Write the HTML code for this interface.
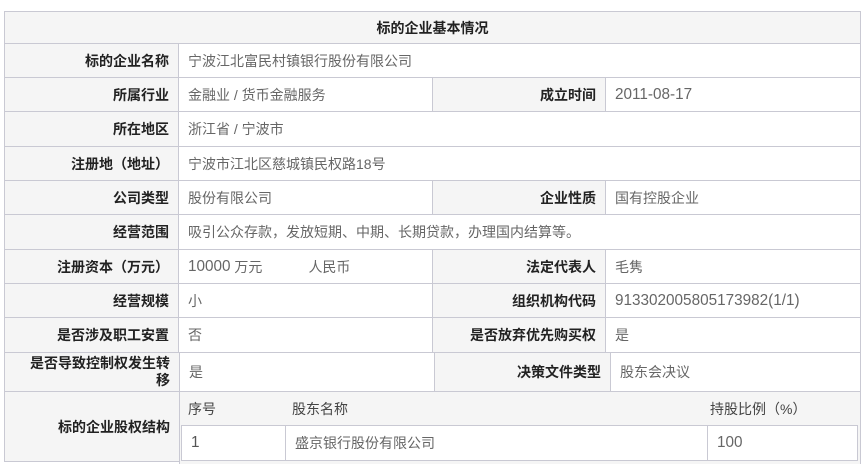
<!DOCTYPE html><html><head><meta charset="utf-8"><style>
body{margin:0;width:865px;height:464px;background:#fff;font-family:"Liberation Sans","Noto Sans CJK SC",sans-serif;font-size:14px;position:relative;overflow:hidden}
.c{position:absolute;box-sizing:border-box;border:1px solid #c9c9d3;display:flex;align-items:center;padding:0 9px;white-space:nowrap}
.l{background:#f5f5f5;justify-content:flex-end;font-weight:bold;color:#222}
.v{color:#666;background:#fff}
.h{background:#f5f5f5;justify-content:center;font-weight:bold;color:#222}
.n{font-size:15.3px}
</style></head><body>
<div class="c h" style="left:4px;top:11px;width:857px;height:33px">标的企业基本情况</div>

<div class="c l" style="left:4px;top:43px;width:175px;height:35px">标的企业名称</div>
<div class="c v" style="left:178px;top:43px;width:683px;height:35px">宁波江北富民村镇银行股份有限公司</div>

<div class="c l" style="left:4px;top:77px;width:175px;height:35px">所属行业</div>
<div class="c v" style="left:178px;top:77px;width:255px;height:35px">金融业 / 货币金融服务</div>
<div class="c l" style="left:432px;top:77px;width:174px;height:35px">成立时间</div>
<div class="c v" style="left:605px;top:77px;width:256px;height:35px"><span class="n">2011-08-17</span></div>

<div class="c l" style="left:4px;top:111px;width:175px;height:36px">所在地区</div>
<div class="c v" style="left:178px;top:111px;width:683px;height:36px">浙江省 / 宁波市</div>

<div class="c l" style="left:4px;top:146px;width:175px;height:35px">注册地（地址）</div>
<div class="c v" style="left:178px;top:146px;width:683px;height:35px">宁波市江北区慈城镇民权路18号</div>

<div class="c l" style="left:4px;top:180px;width:175px;height:35px">公司类型</div>
<div class="c v" style="left:178px;top:180px;width:255px;height:35px">股份有限公司</div>
<div class="c l" style="left:432px;top:180px;width:174px;height:35px">企业性质</div>
<div class="c v" style="left:605px;top:180px;width:256px;height:35px">国有控股企业</div>

<div class="c l" style="left:4px;top:214px;width:175px;height:36px">经营范围</div>
<div class="c v" style="left:178px;top:214px;width:683px;height:36px">吸引公众存款，发放短期、中期、长期贷款，办理国内结算等。</div>

<div class="c l" style="left:4px;top:249px;width:175px;height:35px">注册资本（万元）</div>
<div class="c v" style="left:178px;top:249px;width:255px;height:35px"><span class="n">10000</span>&nbsp;万元<span style="margin-left:46px">人民币</span></div>
<div class="c l" style="left:432px;top:249px;width:174px;height:35px">法定代表人</div>
<div class="c v" style="left:605px;top:249px;width:256px;height:35px">毛隽</div>

<div class="c l" style="left:4px;top:283px;width:175px;height:35px">经营规模</div>
<div class="c v" style="left:178px;top:283px;width:255px;height:35px">小</div>
<div class="c l" style="left:432px;top:283px;width:174px;height:35px">组织机构代码</div>
<div class="c v" style="left:605px;top:283px;width:256px;height:35px"><span class="n">913302005805173982(1/1)</span></div>

<div class="c l" style="left:4px;top:317px;width:175px;height:36px">是否涉及职工安置</div>
<div class="c v" style="left:178px;top:317px;width:255px;height:36px">否</div>
<div class="c l" style="left:432px;top:317px;width:174px;height:36px">是否放弃优先购买权</div>
<div class="c v" style="left:605px;top:317px;width:256px;height:36px">是</div>

<div class="c l" style="left:4px;top:352px;width:176px;height:40px;white-space:normal;text-align:right;line-height:17px;padding:0 9px 0 18px">是否导致控制权发生转移</div>
<div class="c v" style="left:179px;top:352px;width:256px;height:40px">是</div>
<div class="c l" style="left:434px;top:352px;width:177px;height:40px">决策文件类型</div>
<div class="c v" style="left:610px;top:352px;width:251px;height:40px">股东会决议</div>

<div class="c l" style="left:4px;top:391px;width:176px;height:71px">标的企业股权结构</div>
<div class="c" style="left:179px;top:391px;width:682px;height:73px;background:#f5f5f5;border-bottom:none;align-items:flex-start;padding:0"></div>
<div style="position:absolute;left:188px;top:399px;color:#444">序号</div>
<div style="position:absolute;left:292px;top:399px;color:#444">股东名称</div>
<div style="position:absolute;left:710px;top:399px;color:#444">持股比例（%）</div>
<div class="c v" style="left:181px;top:425px;width:105px;height:36px;color:#555"><span class="n">1</span></div>
<div class="c v" style="left:285px;top:425px;width:423px;height:36px">盛京银行股份有限公司</div>
<div class="c v" style="left:707px;top:425px;width:151px;height:36px"><span class="n">100</span></div>
</body></html>
